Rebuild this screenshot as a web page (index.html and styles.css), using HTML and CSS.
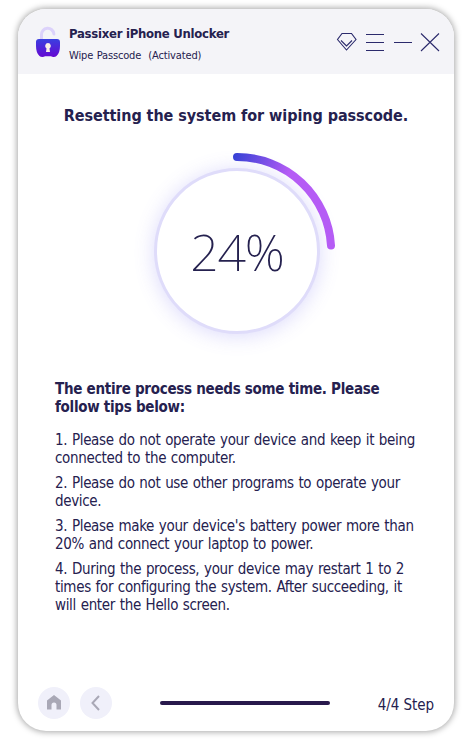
FILE: index.html
```html
<!DOCTYPE html>
<html lang="en">
<head>
    <meta charset="UTF-8">
    <meta name="viewport" content="width=device-width, initial-scale=1.0">
    <title>Passixer iPhone Unlocker</title>
    <link rel="stylesheet" href="styles.css">
</head>
<body>
    <div class="window">
        <header class="titlebar">
            <svg class="logo" width="26" height="32" viewBox="0 0 26 32">
                <defs>
                    <linearGradient id="lockFill" x1="0" y1="0" x2="0" y2="1">
                        <stop offset="0" stop-color="#3a3fe0"/>
                        <stop offset="1" stop-color="#6608d2"/>
                    </linearGradient>
                </defs>
                <path d="M6.500 14V9a6.200 6.200 0 0 1 12.400-1" fill="none" stroke="#dcd2fb" stroke-width="3" stroke-linecap="round"/>
                <path d="M4 13h18q3 0 3 3v4q0 7-3.500 10-1 1-3 1-1.500 0-2.500-.8h-6q-1 .8-2.500.8-2 0-3-1Q1 27 1 20v-4q0-3 3-3z" fill="url(#lockFill)"/>
                <path d="M13 17a3 3 0 0 1 1.500 5.500l.5 3.500h-4l.5-3.500A3 3 0 0 1 13 17z" fill="#fbeee6"/>
            </svg>
            <div class="titles">
                <h1>Passixer iPhone Unlocker</h1>
                <p>Wipe Passcode&nbsp; (Activated)</p>
            </div>
            <svg class="controls" width="104" height="22" viewBox="0 0 104 22" fill="none" stroke="#2b2a6c" stroke-width="1.1">
                <path d="M6 2.500h9.500l4.500 6L10.500 19 1.500 8.500z"/>
                <path d="M5 9.500l5.500 5.500L16 9.500"/>
                <path d="M30 3.500h18M30 11.500h18M30 19.500h18M58 11.500h18"/>
                <path d="M85 2.500l18 17.500M103 2.500L85 20"/>
            </svg>
        </header>

        <main class="content">
            <h2>Resetting the system for wiping passcode.</h2>

            <div class="progress">
                <svg class="arc" width="200" height="200" viewBox="0 0 200 200">
                    <defs>
                        <linearGradient id="arcFill" gradientUnits="userSpaceOnUse" x1="96" y1="0" x2="150" y2="26">
                            <stop offset="0" stop-color="#3040d4"/>
                            <stop offset="1" stop-color="#b55cf5"/>
                        </linearGradient>
                    </defs>
                    <path d="M100 6A94 94 0 0 1 194 94.500" fill="none" stroke="url(#arcFill)" stroke-width="8" stroke-linecap="round"/>
                </svg>
                <div class="dial">24%</div>
            </div>

            <h3>The entire process needs some time. Please<br>follow tips below:</h3>
            <div class="tips">
                <p>1. Please do not operate your device and keep it being<br>connected to the computer.</p>
                <p>2. Please do not use other programs to operate your<br>device.</p>
                <p>3. Please make your device's battery power more than<br>20% and connect your laptop to power.</p>
                <p>4. During the process, your device may restart 1 to 2<br>times for configuring the system. After succeeding, it<br>will enter the Hello screen.</p>
            </div>
        </main>

        <footer class="bottom">
            <button class="round" aria-label="Home">
                <svg width="16" height="16" viewBox="0 0 16 16"><path d="M8 0l7 5.500V14.500h-4.500V10a2.500 2.500 0 0 0-5 0v4.500H1v-9z" fill="#a9a8b6"/></svg>
            </button>
            <button class="round" aria-label="Back">
                <svg width="16" height="16" viewBox="0 0 16 16"><path d="M11 1L4.500 8l6.500 7" fill="none" stroke="#a9a8b6" stroke-width="2"/></svg>
            </button>
            <div class="bar"></div>
            <span class="step">4/4 Step</span>
        </footer>
    </div>
</body>
</html>
```
FILE: styles.css
```css
* {
    box-sizing: border-box;
}
body {
    margin: 0;
    padding: 9px 18px;
    background: #fff;
    color: #25214f;
    font-family: "DejaVu Sans Condensed", "DejaVu Sans", sans-serif;
    font-stretch: condensed;
}
h1, h2, h3, p {
    margin: 0;
}
.window {
    display: flex;
    flex-direction: column;
    height: 722px;
    background: #fff;
    border-radius: 28px;
    box-shadow: 0 0 6px 1px rgba(0,0,0,0.35);
    overflow: hidden;
}
.titlebar {
    display: flex;
    height: 65px;
    padding: 17px 14px 0 17px;
    background: #f4f4f8;
}
.titles {
    flex: 1;
    padding-left: 8px;
    white-space: nowrap;
}
.titles h1 {
    font-size: 13px;
    line-height: 16px;
    letter-spacing: -0.27px;
}
.titles p {
    margin-top: 6px;
    font-size: 11px;
    line-height: 15px;
    letter-spacing: -0.15px;
    word-spacing: 0.6px;
}
.controls {
    margin-top: 5px;
}
.content {
    flex: 1;
    padding: 0 37px;
    white-space: nowrap;
}
h2 {
    margin-top: 31px;
    font-size: 16px;
    line-height: 22px;
    letter-spacing: -0.06px;
    text-align: center;
}
.progress {
    display: grid;
    place-items: center;
    width: 200px;
    height: 200px;
    margin: 24px auto 0;
    transform: translateX(1px);
}
.progress > * {
    grid-area: 1 / 1;
}
.arc {
    z-index: 1;
}
.dial {
    width: 166px;
    height: 166px;
    border: 3px solid #dfdcfa;
    border-radius: 50%;
    background: #fff;
    box-shadow: 0 2px 20px rgba(110,100,240,0.24);
    font: 200 50px/162px "Noto Sans", "Open Sans", sans-serif;
    letter-spacing: -1.2px;
    text-align: center;
}
h3 {
    margin-top: 29px;
    font-size: 15px;
    line-height: 18px;
    letter-spacing: -0.28px;
}
.tips {
    margin-top: 15px;
    font-size: 15px;
    line-height: 18px;
    letter-spacing: -0.34px;
    word-spacing: 0.8px;
}
.tips p {
    margin-bottom: 7px;
}
.bottom {
    display: flex;
    align-items: center;
    height: 56px;
    padding: 0 20px;
}
.round {
    display: flex;
    align-items: center;
    justify-content: center;
    width: 32px;
    height: 32px;
    margin-right: 10px;
    padding: 0;
    border: none;
    border-radius: 50%;
    background: #f0f0fa;
}
.bar {
    width: 170px;
    height: 4px;
    margin-left: 38px;
    border-radius: 2px;
    background: #28194c;
}
.step {
    margin-left: auto;
    padding-top: 4px;
    font-size: 15px;
    letter-spacing: -0.05px;
}
```
